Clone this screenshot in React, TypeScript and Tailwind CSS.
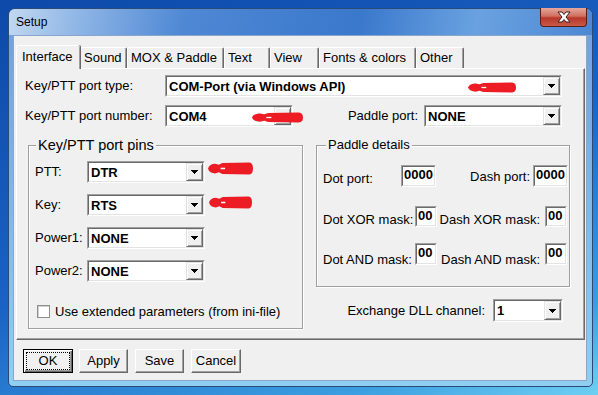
import React from "react";

function RedArrow({ className }: { className: string }) {
  return (
    <svg className={`absolute ${className}`} viewBox="0 0 50 12" preserveAspectRatio="none">
      <path
        d="M0 6 C1 3 4 1.5 8 1.5 L12 2.5 L16 1 L46 0.5 Q50 1 50 6 Q50 11 46 11.5 L16 11 L12 9.5 L8 10.5 C4 10.5 1 9 0 6Z"
        fill="#ed1c24"
      />
      <rect x="14" y="5.3" width="5" height="1.4" fill="#fff" />
    </svg>
  );
}

function DropBtn() {
  return (
    <div className="flex w-[17px] shrink-0 items-center justify-center border border-t-[#e3e3e3] border-l-[#e3e3e3] border-r-[#696969] border-b-[#696969] bg-[#f0f0f0] shadow-[inset_1px_1px_0_0_#fff,inset_-1px_-1px_0_0_#a0a0a0]">
      <svg width="7" height="4" viewBox="0 0 7 4">
        <path d="M0 0h7v1H0zM1 1h5v1H1zM2 2h3v1H2zM3 3h1v1H3z" fill="#000" />
      </svg>
    </div>
  );
}

function Combo({ className, value }: { className: string; value: string }) {
  return (
    <div className={`flex shrink-0 border border-t-[#a0a0a0] border-l-[#a0a0a0] border-r-white border-b-white ${className}`}>
      <div className="flex flex-1 border border-t-[#696969] border-l-[#696969] border-r-[#e3e3e3] border-b-[#e3e3e3] bg-white">
        <span className="flex flex-1 items-center pl-[2px] text-[13px] font-bold leading-none">{value}</span>
        <DropBtn />
      </div>
    </div>
  );
}

function Edit({ className, value }: { className: string; value: string }) {
  return (
    <div className={`flex shrink-0 border border-t-[#a0a0a0] border-l-[#a0a0a0] border-r-white border-b-white ${className}`}>
      <div className="flex-1 border border-t-[#696969] border-l-[#696969] border-r-[#e3e3e3] border-b-[#e3e3e3] bg-white pl-[1px] pt-[1px] text-[13px] font-bold leading-[14px]">
        {value}
      </div>
    </div>
  );
}

function Btn({ className, label, def }: { className: string; label: string; def?: boolean }) {
  if (def) {
    return (
      <div className={`flex h-[24px] border border-black bg-[#f0f0f0] shadow-[inset_1px_1px_0_0_#fff,inset_-1px_-1px_0_0_#696969,inset_-2px_-2px_0_0_#a0a0a0] ${className}`}>
        <div className="m-[2px] flex flex-1 items-center justify-center border border-dotted border-black text-[13px]">{label}</div>
      </div>
    );
  }
  return (
    <div className={`flex h-[24px] items-center justify-center border border-t-white border-l-white border-r-[#696969] border-b-[#696969] bg-[#f0f0f0] text-[13px] shadow-[inset_-1px_-1px_0_0_#a0a0a0] ${className}`}>
      {label}
    </div>
  );
}

const tabs: [string, string][] = [
  ["Sound", "w-[47px]"],
  ["MOX & Paddle", "w-[97px]"],
  ["Text", "w-[46px]"],
  ["View", "w-[49px]"],
  ["Fonts & colors", "w-[97px]"],
  ["Other", "w-[48px]"],
];

export default function App() {
  return (
    <div className="relative h-[395px] w-[598px] overflow-hidden bg-[linear-gradient(160deg,#0d49a8_0%,#1a62c4_50%,#3b9ee0_85%,#6fd0f3_100%)] pl-[8px] pt-[8px] font-['Liberation_Sans',Arial,sans-serif] text-black">
      <div className="flex h-[379px] w-[585px] flex-col rounded-b-[5px] rounded-t-[7px] border border-[#2a4a78] bg-[linear-gradient(180deg,#6f9fdc,#8fcff1)]">
        {/* title bar */}
        <div className="flex h-[26px] shrink-0 justify-between rounded-t-[6px] bg-[linear-gradient(100deg,#c2d8f0_0%,#8fb6e6_12%,#4f88d4_30%,#3a78cc_60%,#6aa2e0_80%,#4d87d3_100%)]">
          <span className="pl-[7px] pt-[6px] text-[12px] leading-[15px]">Setup</span>
          <div className="mr-[5px] -mt-[1px] flex h-[19px] w-[47px] items-center justify-center rounded-b-[4px] border border-t-0 border-[#5a1e18] bg-[linear-gradient(180deg,#e6a79c_0%,#d0705f_45%,#b8372a_55%,#c85a48_100%)]">
            <svg width="14" height="12" viewBox="0 0 14 12">
              <path d="M1 1h4l2 2.5L9 1h4L9 6l4 5H9L7 8.5 5 11H1l4-5z" fill="#fff" stroke="#3a2020" strokeWidth="1" />
            </svg>
          </div>
        </div>

        {/* client */}
        <div className="ml-[4px] flex h-[346px] w-[574px] flex-col border border-[#8aa6cc] bg-[#f0f0f0]">
          {/* tabs */}
          <div className="flex h-[32px] shrink-0 items-end pl-[2px]">
            <div className="relative z-10 -mb-[1px] h-[24px] w-[64px] rounded-t-[2px] border-l border-t border-white bg-[#f0f0f0] pl-[5px] pt-[3px] text-[13px] leading-[15px] shadow-[inset_-1px_0_0_0_#a0a0a0,1px_0_0_0_#696969]">
              Interface
            </div>
            {tabs.map(([t, w]) => (
              <div
                key={t}
                className={`h-[21px] rounded-t-[2px] border-l border-r border-t border-l-white border-t-white border-r-[#696969] bg-[#f0f0f0] pl-[3px] pt-[2px] text-[13px] leading-[15px] shadow-[inset_-1px_0_0_0_#a0a0a0] ${w}`}
              >
                {t}
              </div>
            ))}
          </div>

          {/* panel */}
          <div className="ml-[2px] flex h-[272px] w-[569px] shrink-0 flex-col border border-b-[#696969] border-l-white border-r-[#696969] border-t-white shadow-[inset_-1px_-1px_0_0_#a0a0a0]">
            <div className="mt-[6px] flex h-[22px] items-center pl-[8px]">
              <span className="w-[140px] text-[13px]">Key/PTT port type:</span>
              <Combo className="h-[22px] w-[397px]" value="COM-Port (via Windows API)" />
            </div>
            <div className="mt-[8px] flex h-[22px] items-center pl-[8px]">
              <span className="w-[140px] text-[13px]">Key/PTT port number:</span>
              <Combo className="h-[22px] w-[128px]" value="COM4" />
              <span className="w-[131px] pr-[6px] text-right text-[13px]">Paddle port:</span>
              <Combo className="h-[22px] w-[138px]" value="NONE" />
            </div>

            <div className="mt-[18px] flex pl-[11px]">
              {/* left group */}
              <div className="flex h-[184px] w-[275px] flex-col border border-[#a0a0a0] shadow-[inset_1px_1px_0_0_#fff,1px_1px_0_0_#fff]">
                <span className="-mt-[9px] ml-[7px] w-fit bg-[#f0f0f0] px-[2px] text-[14.5px] leading-[16px]">Key/PTT port pins</span>
                {[
                  ["PTT:", "DTR", "mt-[8px]"],
                  ["Key:", "RTS", "mt-[11px]"],
                  ["Power1:", "NONE", "mt-[11px]"],
                  ["Power2:", "NONE", "mt-[11px]"],
                ].map(([l, v, m]) => (
                  <div key={l} className={`flex h-[22px] items-center ${m}`}>
                    <span className="w-[58px] pl-[6px] text-[13px]">{l}</span>
                    <Combo className="h-[22px] w-[118px]" value={v} />
                  </div>
                ))}
                <div className="mt-[23px] flex items-center pl-[8px]">
                  <div className="h-[13px] w-[13px] border border-[#8e8f8f] bg-white shadow-[inset_1px_1px_0_0_#d0d0d0]" />
                  <span className="ml-[5px] text-[13px] leading-[13px]">Use extended parameters (from ini-file)</span>
                </div>
              </div>

              {/* right column */}
              <div className="ml-[13px] flex w-[254px] flex-col">
                <div className="flex h-[142px] flex-col border border-[#a0a0a0] shadow-[inset_1px_1px_0_0_#fff,1px_1px_0_0_#fff]">
                  <span className="-mt-[9px] ml-[9px] w-fit bg-[#f0f0f0] px-[2px] text-[13px] leading-[16px]">Paddle details</span>
                  <div className="mt-[12px] flex h-[22px] pl-[6px] text-[13px]">
                    <span className="w-[78px] pt-[4px]">Dot port:</span>
                    <Edit className="h-[22px] w-[35px]" value="0000" />
                    <span className="w-[97px] pr-[3px] pt-[2px] text-right">Dash port:</span>
                    <Edit className="h-[22px] w-[35px]" value="0000" />
                  </div>
                  <div className="mt-[19px] flex h-[21px] pl-[6px] text-[13px]">
                    <span className="w-[92px] pt-[4px]">Dot XOR mask:</span>
                    <Edit className="h-[21px] w-[22px]" value="00" />
                    <span className="w-[108px] pr-[5px] pt-[4px] text-right">Dash XOR mask:</span>
                    <Edit className="h-[21px] w-[22px]" value="00" />
                  </div>
                  <div className="mt-[16px] flex h-[22px] pl-[6px] text-[13px]">
                    <span className="w-[92px] pt-[7px]">Dot AND mask:</span>
                    <Edit className="h-[22px] w-[22px]" value="00" />
                    <span className="w-[108px] pr-[5px] pt-[7px] text-right">Dash AND mask:</span>
                    <Edit className="h-[22px] w-[22px]" value="00" />
                  </div>
                </div>
                <div className="mt-[12px] flex h-[23px] items-center justify-end pr-[7px]">
                  <span className="mr-[8px] text-[13px]">Exchange DLL channel:</span>
                  <Combo className="h-[23px] w-[70px]" value="1" />
                </div>
              </div>
            </div>
          </div>

          {/* buttons */}
          <div className="mt-[9px] flex pl-[9px]">
            <Btn className="w-[50px]" label="OK" def />
            <Btn className="ml-[6px] w-[49px]" label="Apply" />
            <Btn className="ml-[7px] w-[49px]" label="Save" />
            <Btn className="ml-[7px] w-[50px]" label="Cancel" />
          </div>
        </div>
      </div>

      <RedArrow className="left-[468px] top-[82px] h-[11px] w-[48px]" />
      <RedArrow className="left-[252px] top-[112px] h-[11px] w-[51px]" />
      <RedArrow className="left-[208px] top-[162px] h-[13px] w-[45px]" />
      <RedArrow className="left-[209px] top-[196px] h-[13px] w-[43px]" />
    </div>
  );
}
